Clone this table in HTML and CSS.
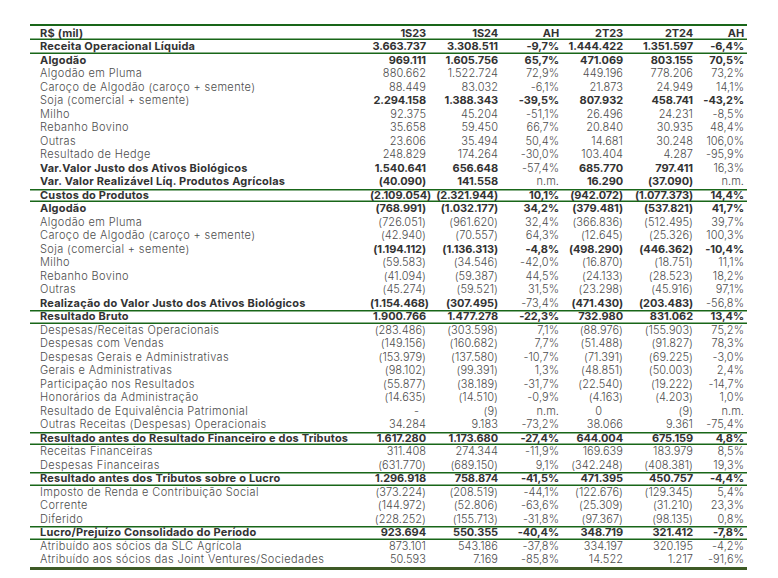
FILE: index.html
```html
<!DOCTYPE html>
<html lang="pt-BR">
<head>
<meta charset="utf-8">
<title>DRE</title>
<link rel="stylesheet" href="styles.css">
</head>
<body>
<div class="tbl">
  <div class="row head b"><span>R$ (mil)</span><span>1S23</span><span>1S24</span><span>AH</span><span>2T23</span><span>2T24</span><span>AH</span></div>
  <div class="row b lb"><span>Receita Operacional Líquida</span><span>3.663.737</span><span>3.308.511</span><span>-9,7%</span><span>1.444.422</span><span>1.351.597</span><span>-6,4%</span></div>
  <div class="row b"><span>Algodão</span><span>969.111</span><span>1.605.756</span><span>65,7%</span><span>471.069</span><span>803.155</span><span>70,5%</span></div>
  <div class="row"><span>Algodão em Pluma</span><span>880.662</span><span>1.522.724</span><span>72,9%</span><span>449.196</span><span>778.206</span><span>73,2%</span></div>
  <div class="row"><span>Caroço de Algodão (caroço + semente)</span><span>88.449</span><span>83.032</span><span>-6,1%</span><span>21.873</span><span>24.949</span><span>14,1%</span></div>
  <div class="row bn"><span>Soja (comercial + semente)</span><span>2.294.158</span><span>1.388.343</span><span>-39,5%</span><span>807.932</span><span>458.741</span><span>-43,2%</span></div>
  <div class="row"><span>Milho</span><span>92.375</span><span>45.204</span><span>-51,1%</span><span>26.496</span><span>24.231</span><span>-8,5%</span></div>
  <div class="row"><span>Rebanho Bovino</span><span>35.658</span><span>59.450</span><span>66,7%</span><span>20.840</span><span>30.935</span><span>48,4%</span></div>
  <div class="row"><span>Outras</span><span>23.606</span><span>35.494</span><span>50,4%</span><span>14.681</span><span>30.248</span><span>106,0%</span></div>
  <div class="row"><span>Resultado de Hedge</span><span>248.829</span><span>174.264</span><span>-30,0%</span><span>103.404</span><span>4.287</span><span>-95,9%</span></div>
  <div class="row b"><span>Var.Valor Justo dos Ativos Biológicos</span><span>1.540.641</span><span>656.648</span><span class="r">-57,4%</span><span>685.770</span><span>797.411</span><span class="r">16,3%</span></div>
  <div class="row b"><span>Var. Valor Realizável Líq. Produtos Agrícolas</span><span>(40.090)</span><span>141.558</span><span class="r">n.m.</span><span>16.290</span><span>(37.090)</span><span class="r">n.m.</span></div>
  <div class="row b lt lb"><span>Custos do Produtos</span><span>(2.109.054)</span><span>(2.321.944)</span><span>10,1%</span><span>(942.072)</span><span>(1.077.373)</span><span>14,4%</span></div>
  <div class="row b"><span>Algodão</span><span>(768.991)</span><span>(1.032.177)</span><span>34,2%</span><span>(379.481)</span><span>(537.821)</span><span>41,7%</span></div>
  <div class="row"><span>Algodão em Pluma</span><span>(726.051)</span><span>(961.620)</span><span>32,4%</span><span>(366.836)</span><span>(512.495)</span><span>39,7%</span></div>
  <div class="row"><span>Caroço de Algodão (caroço + semente)</span><span>(42.940)</span><span>(70.557)</span><span>64,3%</span><span>(12.645)</span><span>(25.326)</span><span>100,3%</span></div>
  <div class="row bn"><span>Soja (comercial + semente)</span><span>(1.194.112)</span><span>(1.136.313)</span><span>-4,8%</span><span>(498.290)</span><span>(446.362)</span><span>-10,4%</span></div>
  <div class="row"><span>Milho</span><span>(59.583)</span><span>(34.546)</span><span>-42,0%</span><span>(16.870)</span><span>(18.751)</span><span>11,1%</span></div>
  <div class="row"><span>Rebanho Bovino</span><span>(41.094)</span><span>(59.387)</span><span>44,5%</span><span>(24.133)</span><span>(28.523)</span><span>18,2%</span></div>
  <div class="row"><span>Outras</span><span>(45.274)</span><span>(59.521)</span><span>31,5%</span><span>(23.298)</span><span>(45.916)</span><span>97,1%</span></div>
  <div class="row b"><span>Realização do Valor Justo dos Ativos Biológicos</span><span>(1.154.468)</span><span>(307.495)</span><span class="r">-73,4%</span><span>(471.430)</span><span>(203.483)</span><span class="r">-56,8%</span></div>
  <div class="row b lt lb"><span>Resultado Bruto</span><span>1.900.766</span><span>1.477.278</span><span>-22,3%</span><span>732.980</span><span>831.062</span><span>13,4%</span></div>
  <div class="row"><span>Despesas/Receitas Operacionais</span><span>(283.486)</span><span>(303.598)</span><span>7,1%</span><span>(88.976)</span><span>(155.903)</span><span>75,2%</span></div>
  <div class="row"><span>Despesas com Vendas</span><span>(149.156)</span><span>(160.682)</span><span>7,7%</span><span>(51.488)</span><span>(91.827)</span><span>78,3%</span></div>
  <div class="row"><span>Despesas Gerais e Administrativas</span><span>(153.979)</span><span>(137.580)</span><span>-10,7%</span><span>(71.391)</span><span>(69.225)</span><span>-3,0%</span></div>
  <div class="row"><span>Gerais e Administrativas</span><span>(98.102)</span><span>(99.391)</span><span>1,3%</span><span>(48.851)</span><span>(50.003)</span><span>2,4%</span></div>
  <div class="row"><span>Participação nos Resultados</span><span>(55.877)</span><span>(38.189)</span><span>-31,7%</span><span>(22.540)</span><span>(19.222)</span><span>-14,7%</span></div>
  <div class="row"><span>Honorários da Administração</span><span>(14.635)</span><span>(14.510)</span><span>-0,9%</span><span>(4.163)</span><span>(4.203)</span><span>1,0%</span></div>
  <div class="row"><span>Resultado de Equivalência Patrimonial</span><span class="dash">-</span><span>(9)</span><span>n.m.</span><span class="zero">0</span><span>(9)</span><span>n.m.</span></div>
  <div class="row"><span>Outras Receitas (Despesas) Operacionais</span><span>34.284</span><span>9.183</span><span>-73,2%</span><span>38.066</span><span>9.361</span><span>-75,4%</span></div>
  <div class="row b lt lb"><span>Resultado antes do Resultado Financeiro e dos Tributos</span><span>1.617.280</span><span>1.173.680</span><span>-27,4%</span><span>644.004</span><span>675.159</span><span>4,8%</span></div>
  <div class="row"><span>Receitas Financeiras</span><span>311.408</span><span>274.344</span><span>-11,9%</span><span>169.639</span><span>183.979</span><span>8,5%</span></div>
  <div class="row"><span>Despesas Financeiras</span><span>(631.770)</span><span>(689.150)</span><span>9,1%</span><span>(342.248)</span><span>(408.381)</span><span>19,3%</span></div>
  <div class="row b lt lb"><span>Resultado antes dos Tributos sobre o Lucro</span><span>1.296.918</span><span>758.874</span><span>-41,5%</span><span>471.395</span><span>450.757</span><span>-4,4%</span></div>
  <div class="row"><span>Imposto de Renda e Contribuição Social</span><span>(373.224)</span><span>(208.519)</span><span>-44,1%</span><span>(122.676)</span><span>(129.345)</span><span>5,4%</span></div>
  <div class="row"><span>Corrente</span><span>(144.972)</span><span>(52.806)</span><span>-63,6%</span><span>(25.309)</span><span>(31.210)</span><span>23,3%</span></div>
  <div class="row"><span>Diferido</span><span>(228.252)</span><span>(155.713)</span><span>-31,8%</span><span>(97.367)</span><span>(98.135)</span><span>0,8%</span></div>
  <div class="row b lt lb"><span>Lucro/Prejuízo Consolidado do Período</span><span>923.694</span><span>550.355</span><span>-40,4%</span><span>348.719</span><span>321.412</span><span>-7,8%</span></div>
  <div class="row"><span>Atribuído aos sócios da SLC Agrícola</span><span>873.101</span><span>543.186</span><span>-37,8%</span><span>334.197</span><span>320.195</span><span>-4,2%</span></div>
  <div class="row"><span>Atribuído aos sócios das Joint Ventures/Sociedades</span><span>50.593</span><span>7.169</span><span>-85,8%</span><span>14.522</span><span>1.217</span><span>-91,6%</span></div>
</div>
</body>
</html>
```

FILE: styles.css
```css
html, body {
  margin: 0;
  padding: 0;
  background: #ffffff;
}

body {
  font-family: Inter, "Open Sans", "DejaVu Sans", sans-serif;
  font-size: 11px;
  color: #4a4a4a;
}

.tbl {
  width: 717px;
  margin: 24px 0 0 30px;
  border-top: 2px solid #196619;
  border-bottom: 3px solid #3e5a26;
}

.row {
  display: grid;
  grid-template-columns: 340px 59px 72px 61px 64px 70px 51px;
  height: 13.5px;
  line-height: 13.5px;
  font-weight: 300;
  color: #4d4d4d;
}

.row > span {
  text-align: right;
  padding-right: 3px;
  white-space: nowrap;
  letter-spacing: 0.05px;
}

.row > span:first-child {
  text-align: left;
  padding-left: 10px;
  letter-spacing: 0.38px;
}

.row.head {
  height: 14px;
  line-height: 14px;
}

.b > span,
.bn > span {
  font-weight: 700;
  color: #333333;
  letter-spacing: -0.1px;
}

.b > span:first-child {
  letter-spacing: 0.2px;
}

.bn > span:first-child,
.b > span.r {
  font-weight: 300;
  color: #4d4d4d;
}

.bn > span:first-child {
  letter-spacing: 0.38px;
}

.b > span.r {
  letter-spacing: 0.05px;
}

.lt {
  box-shadow: inset 0 1.5px 0 #196619;
}

.lb {
  box-shadow: inset 0 -1.5px 0 #196619;
}

.lt.lb {
  box-shadow: inset 0 1.5px 0 #196619, inset 0 -1.5px 0 #196619;
}

.head {
  box-shadow: inset 0 -1.5px 0 #196619;
}

.row > span.dash {
  padding-right: 10px;
}

.row > span.zero {
  padding-right: 24px;
}
```
